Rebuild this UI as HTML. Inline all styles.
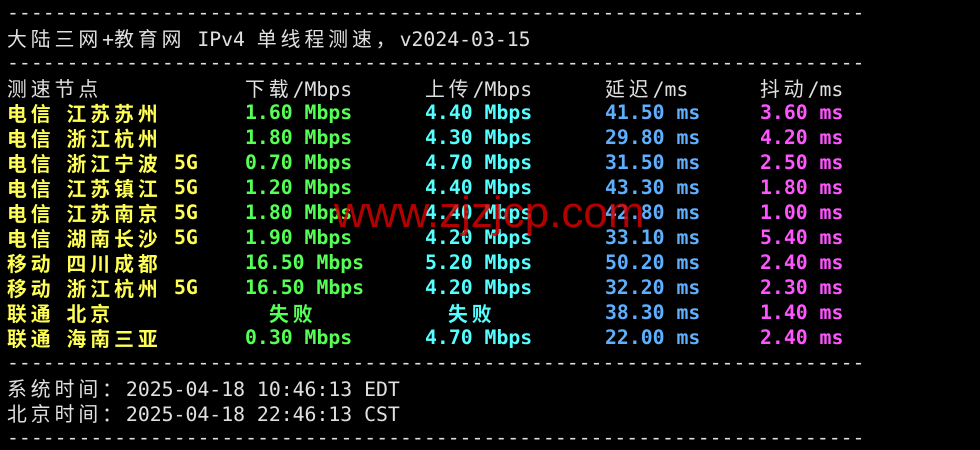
<!DOCTYPE html><html><head><meta charset="utf-8"><style>
body{margin:0;background:#000;width:980px;height:441px;overflow:hidden;position:relative;font-family:"DejaVu Sans Mono","Liberation Mono","Noto Sans CJK SC",monospace;font-size:19.8px;color:#e0e0e0}
.l{position:absolute;left:7px;height:25px;line-height:25px;white-space:pre}
.c{letter-spacing:4px;font-family:"Noto Sans CJK SC","WenQuanYi Zen Hei",sans-serif}
.b{font-weight:bold}
.y{color:#ffff55}.g{color:#55ff55}.cy{color:#55ffff}.bl{color:#5fafff}.m{color:#ff55ff}
.wm{position:absolute;left:334px;top:188px;font-family:"Liberation Sans",sans-serif;font-size:44px;color:rgba(210,0,0,.85)}
</style></head><body>
<div class="l" style="top:0">------------------------------------------------------------------------</div>
<div class="l" style="top:25px"><span class="c">大陆三网</span>+<span class="c">教育网</span> IPv4 <span class="c">单线程测速，</span>v2024-03-15</div>
<div class="l" style="top:50px">------------------------------------------------------------------------</div>
<div class="l" style="top:75px"><span class="c">测速节点</span></div>
<div class="l" style="top:75px;left:245px"><span class="c">下载</span>/Mbps</div>
<div class="l" style="top:75px;left:425px"><span class="c">上传</span>/Mbps</div>
<div class="l" style="top:75px;left:605px"><span class="c">延迟</span>/ms</div>
<div class="l" style="top:75px;left:760px"><span class="c">抖动</span>/ms</div>

<div id="rows"></div>
<script>
var d=[["电信","江苏苏州","","1.60 Mbps","4.40 Mbps","41.50 ms","3.60 ms"],
["电信","浙江杭州","","1.80 Mbps","4.30 Mbps","29.80 ms","4.20 ms"],
["电信","浙江宁波","5G","0.70 Mbps","4.70 Mbps","31.50 ms","2.50 ms"],
["电信","江苏镇江","5G","1.20 Mbps","4.40 Mbps","43.30 ms","1.80 ms"],
["电信","江苏南京","5G","1.80 Mbps","4.40 Mbps","42.80 ms","1.00 ms"],
["电信","湖南长沙","5G","1.90 Mbps","4.20 Mbps","33.10 ms","5.40 ms"],
["移动","四川成都","","16.50 Mbps","5.20 Mbps","50.20 ms","2.40 ms"],
["移动","浙江杭州","5G","16.50 Mbps","4.20 Mbps","32.20 ms","2.30 ms"],
["联通","北京","","F","F","38.30 ms","1.40 ms"],
["联通","海南三亚","","0.30 Mbps","4.70 Mbps","22.00 ms","2.40 ms"]];
var h="";
d.forEach(function(r,i){var t=100+i*25;
h+='<div class="l b y" style="top:'+t+'px"><span class="c">'+r[0]+'</span> <span class="c">'+r[1]+'</span></div>';
if(r[2])h+='<div class="l b y" style="top:'+t+'px;left:174px">'+r[2]+'</div>';
h+=r[3]=="F"?'<div class="l b g" style="top:'+t+'px;left:269px"><span class="c">失败</span></div>':'<div class="l b g" style="top:'+t+'px;left:245px">'+r[3]+'</div>';
h+=r[4]=="F"?'<div class="l b cy" style="top:'+t+'px;left:448px"><span class="c">失败</span></div>':'<div class="l b cy" style="top:'+t+'px;left:425px">'+r[4]+'</div>';
h+='<div class="l b bl" style="top:'+t+'px;left:605px">'+r[5]+'</div>';
h+='<div class="l b m" style="top:'+t+'px;left:760px">'+r[6]+'</div>';});
document.getElementById("rows").innerHTML=h;
</script>
<div class="l" style="top:350px">------------------------------------------------------------------------</div>
<div class="l" style="top:375px"><span class="c">系统时间：</span>2025-04-18 10:46:13 EDT</div>
<div class="l" style="top:400px"><span class="c">北京时间：</span>2025-04-18 22:46:13 CST</div>
<div class="l" style="top:425px">------------------------------------------------------------------------</div>
<div class="wm">www.zjzjcp.com</div>
</body></html>
